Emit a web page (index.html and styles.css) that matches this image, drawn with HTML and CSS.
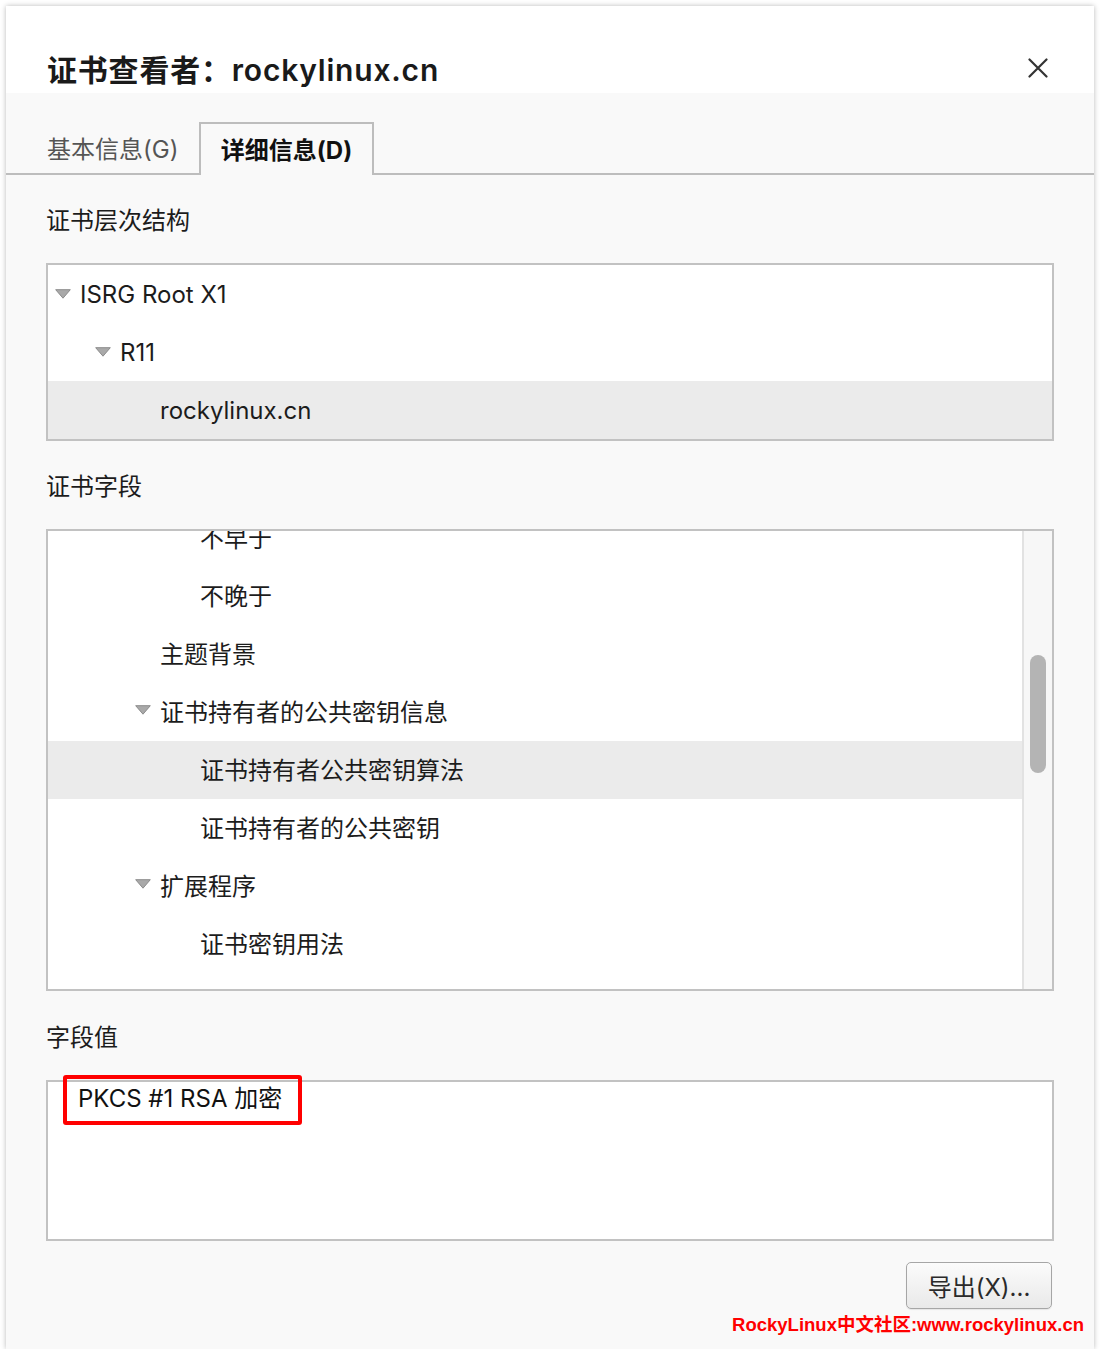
FILE: index.html
```html
<!DOCTYPE html>
<html lang="zh-CN">
<head>
<meta charset="utf-8">
<title>证书查看者</title>
<link rel="stylesheet" href="styles.css">
</head>
<body>
<div class="window">
  <div class="header">
    <div class="title">证书查看者：rockylinux.cn</div>
    <div class="close">
      <svg width="20" height="20" viewBox="0 0 20 20"><path d="M1.5 1.5 L18.5 18.5 M18.5 1.5 L1.5 18.5" stroke="#333" stroke-width="2.2" stroke-linecap="round" fill="none"/></svg>
    </div>
  </div>
  <div class="tabbar">
    <div class="tab">基本信息(G)</div>
    <div class="tab active">详细信息(D)</div>
  </div>
  <div class="content">
    <div class="label">证书层次结构</div>
    <div class="tree">
      <div class="row l0"><svg class="tri" width="16" height="10" viewBox="0 0 16 10"><polygon points="0.7,0.7 15.3,0.7 8,9.2" fill="#a9a9a9" stroke="#8c8c8c" stroke-width="1"/></svg><span>ISRG Root X1</span></div>
      <div class="row l1"><svg class="tri" width="16" height="10" viewBox="0 0 16 10"><polygon points="0.7,0.7 15.3,0.7 8,9.2" fill="#a9a9a9" stroke="#8c8c8c" stroke-width="1"/></svg><span>R11</span></div>
      <div class="row l2 sel"><i class="sp"></i><span>rockylinux.cn</span></div>
    </div>

    <div class="label">证书字段</div>
    <div class="fields">
      <div class="list">
        <div class="list-inner">
          <div class="row l3"><i class="sp"></i><span>不早于</span></div>
          <div class="row l3"><i class="sp"></i><span>不晚于</span></div>
          <div class="row l2"><i class="sp"></i><span>主题背景</span></div>
          <div class="row l2"><svg class="tri" width="16" height="10" viewBox="0 0 16 10"><polygon points="0.7,0.7 15.3,0.7 8,9.2" fill="#a9a9a9" stroke="#8c8c8c" stroke-width="1"/></svg><span>证书持有者的公共密钥信息</span></div>
          <div class="row l3 sel"><i class="sp"></i><span>证书持有者公共密钥算法</span></div>
          <div class="row l3"><i class="sp"></i><span>证书持有者的公共密钥</span></div>
          <div class="row l2"><svg class="tri" width="16" height="10" viewBox="0 0 16 10"><polygon points="0.7,0.7 15.3,0.7 8,9.2" fill="#a9a9a9" stroke="#8c8c8c" stroke-width="1"/></svg><span>扩展程序</span></div>
          <div class="row l3"><i class="sp"></i><span>证书密钥用法</span></div>
        </div>
      </div>
      <div class="track"><div class="thumb"></div></div>
    </div>

    <div class="label label3">字段值</div>
    <div class="value">
      <div class="value-text">PKCS #1 RSA 加密</div>
      <div class="mark"></div>
    </div>

    <div class="footer">
      <div class="btn">导出(X)...</div>
    </div>
    <div class="watermark">RockyLinux中文社区:www.rockylinux.cn</div>
  </div>
</div>
</body>
</html>
```

FILE: styles.css
```css
* { box-sizing: border-box; }
html, body { margin: 0; padding: 0; background: #ffffff; }
body {
  font-family: "Inter", "Noto Sans CJK SC", sans-serif;
  color: #1c1c1c;
}
.window {
  margin: 6px 0 0 6px;
  width: 1088px;
  height: 1343px;
  background: #f9f9f9;
  box-shadow: 0 0 5px rgba(0,0,0,0.28);
  display: flex;
  flex-direction: column;
  overflow: hidden;
}
.header {
  height: 87px;
  background: #ffffff;
  display: flex;
  justify-content: space-between;
  align-items: flex-start;
  padding: 46px 46px 0 41px;
}
.title {
  font-size: 30px;
  line-height: 36px;
  font-weight: 600;
  letter-spacing: 0.8px;
  color: #1a1a1a;
}
.close { margin-top: 6px; width: 20px; height: 20px; }
.close svg { display: block; }
.tabbar {
  display: flex;
  align-items: flex-end;
  padding: 29px 0 0 41px;
  border-bottom: 2px solid #bdbdbd;
}
.tab {
  height: 51px;
  width: 152px;
  display: flex;
  align-items: center;
  font-size: 24px;
  color: #555;
}
.tab.active {
  width: 175px;
  height: 53px;
  margin-bottom: -2px;
  justify-content: center;
  padding-bottom: 2px;
  border: 2px solid #bdbdbd;
  border-bottom: none;
  background: #f9f9f9;
  color: #111;
  font-weight: 700;
}
.content {
  display: flex;
  flex-direction: column;
  padding: 0 40px;
}
.label {
  margin-top: 31px;
  font-size: 24px;
  line-height: 30px;
  color: #1c1c1c;
}
.label3 { margin-top: 32px; }
.tree {
  margin-top: 27px;
  border: 2px solid #c2c2c2;
  background: #fff;
}
.row {
  height: 58px;
  display: flex;
  align-items: center;
  font-size: 24px;
  white-space: nowrap;
}
.row.sel { background: #ebebeb; }
.l0 { padding-left: 7px; }
.l1 { padding-left: 47px; }
.l2 { padding-left: 87px; }
.l3 { padding-left: 127px; }
.tri { display: block; margin-right: 9px; flex: none; }
.sp { display: block; width: 25px; flex: none; }
.fields {
  margin-top: 27px;
  height: 462px;
  border: 2px solid #c2c2c2;
  background: #fff;
  display: flex;
}
.list { flex: 1; overflow: hidden; }
.list-inner { margin-top: -22px; }
.list-inner .row { padding-bottom: 4px; }
.track {
  width: 30px;
  flex: none;
  background: #f7f7f7;
  border-left: 2px solid #e2e2e2;
  padding: 124px 0 0 6px;
}
.thumb {
  width: 16px;
  height: 118px;
  border-radius: 8px;
  background: #b4b4b4;
}
.value {
  position: relative;
  margin-top: 27px;
  height: 161px;
  border: 2px solid #c2c2c2;
  background: #fff;
  padding: 2px 0 0 30px;
}
.value-text {
  font-size: 24px;
  line-height: 30px;
  color: #111;
}
.mark {
  position: absolute;
  left: 15px;
  top: -7px;
  width: 239px;
  height: 50px;
  border: 4px solid #ff0000;
  border-radius: 3px;
}
.footer {
  display: flex;
  justify-content: flex-end;
  margin-top: 21px;
  padding-right: 2px;
}
.btn {
  width: 146px;
  height: 47px;
  border: 1.5px solid #a6a6a6;
  border-radius: 5px;
  background: linear-gradient(#fbfbfb, #e9e9e9);
  box-shadow: 0 1px 1px rgba(0,0,0,0.08);
  display: flex;
  align-items: center;
  justify-content: center;
  font-size: 24px;
  color: #2a2a2a;
}
.watermark {
  margin-top: 5px;
  margin-right: -30px;
  text-align: right;
  font-family: "Liberation Sans", "Noto Sans CJK SC", sans-serif;
  font-weight: 700;
  font-size: 18.5px;
  line-height: 22px;
  color: #ff0000;
}
```
